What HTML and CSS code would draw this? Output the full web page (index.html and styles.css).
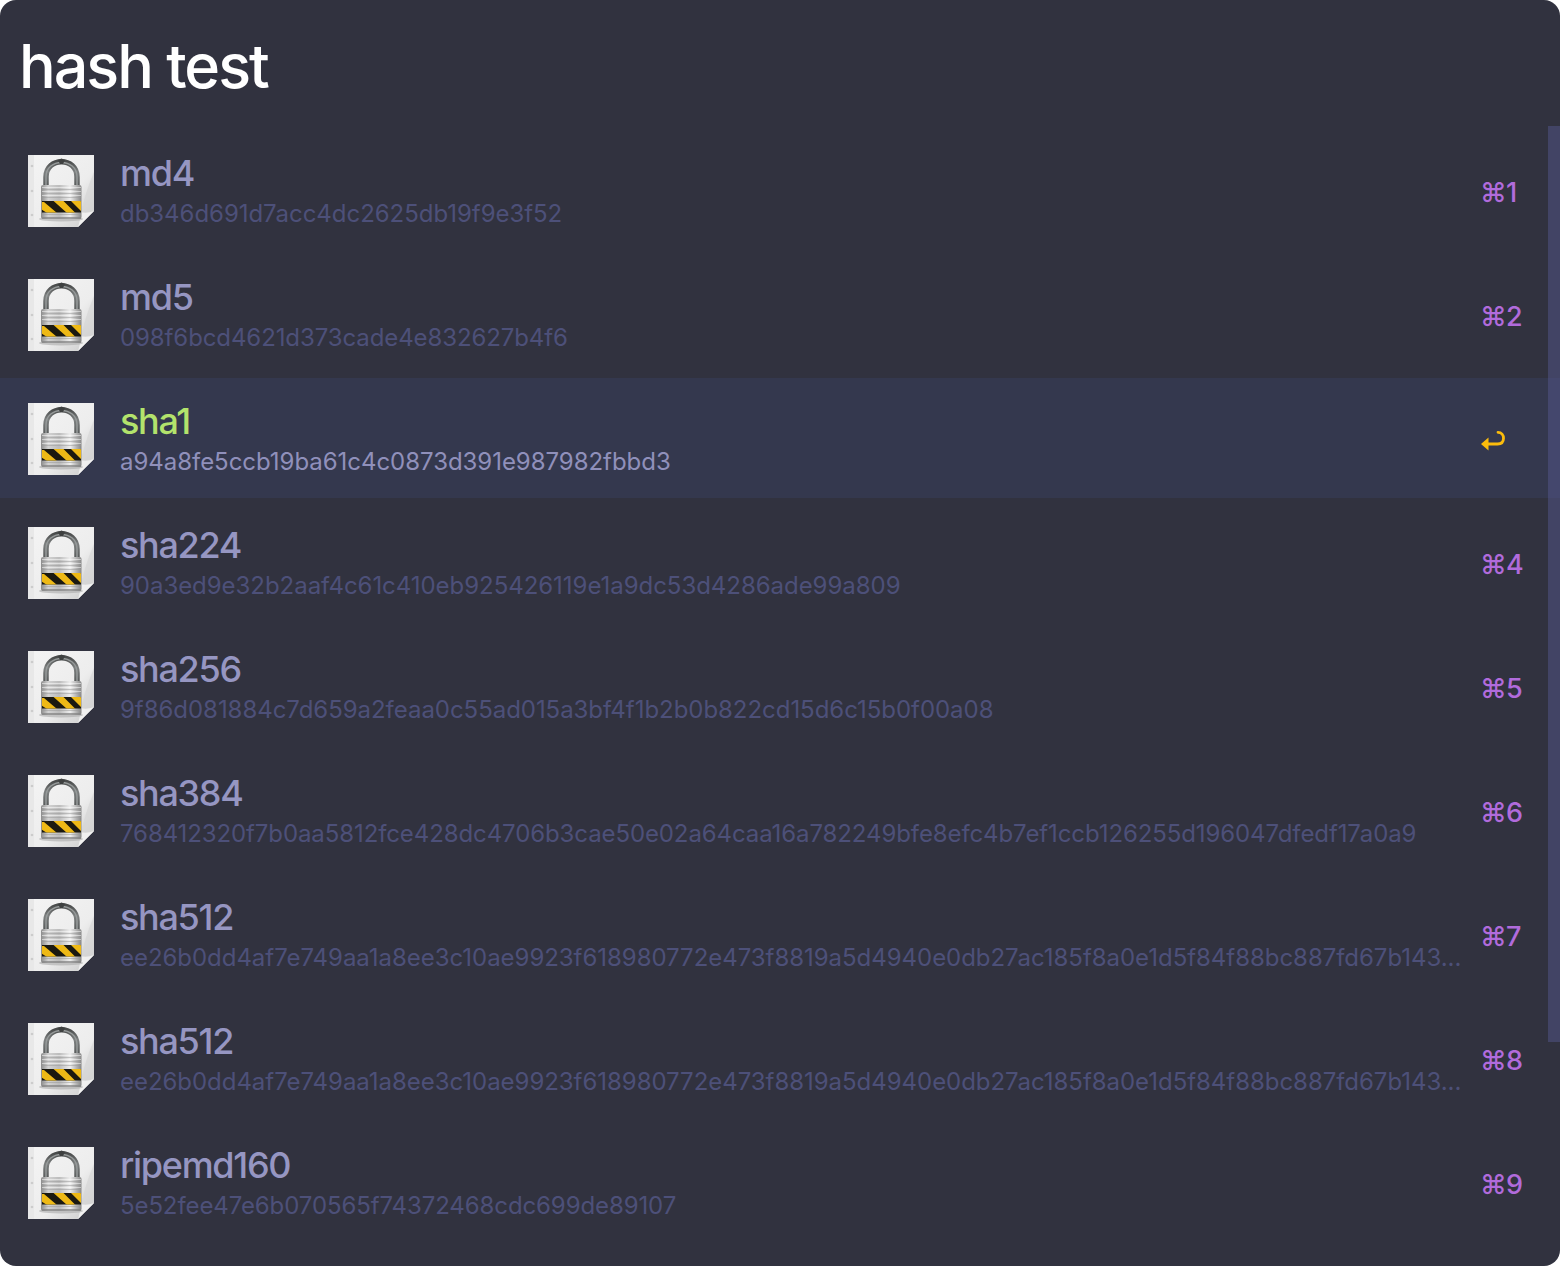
FILE: index.html
```html
<!DOCTYPE html>
<html lang="en">
<head>
<meta charset="utf-8">
<title>hash test</title>
<link rel="stylesheet" href="styles.css">
</head>
<body>
<svg class="defs" aria-hidden="true">
  <defs>
    <linearGradient id="paper" x1="0" y1="0" x2="1" y2="1"><stop offset="0" stop-color="#f4f4f4"/><stop offset=".6" stop-color="#ededed"/><stop offset="1" stop-color="#c9c9c9"/></linearGradient>
    <linearGradient id="metal" x1="0" y1="0" x2="1" y2="0"><stop offset="0" stop-color="#8b8b8b"/><stop offset=".18" stop-color="#d2d2d2"/><stop offset=".45" stop-color="#bcbcbc"/><stop offset=".72" stop-color="#eeeeee"/><stop offset="1" stop-color="#858585"/></linearGradient>
    <linearGradient id="steel" x1="0" y1="0" x2="0" y2="1"><stop offset="0" stop-color="#4a4c4c"/><stop offset=".4" stop-color="#7d8080"/><stop offset="1" stop-color="#555858"/></linearGradient>
    <clipPath id="band"><rect x="15" y="47" width="39" height="11.5"/></clipPath>
    <symbol id="lock" viewBox="0 0 68 74">
      <path d="M1 1H67V57L51 73H1Z" fill="url(#paper)"/>
      <path d="M1 1H7V73H1Z" fill="#e8e8e8"/>
      <path d="M67 18V57L51 73Q57 40 67 18Z" fill="#d3d3d3" opacity=".6"/>
      <path d="M51 73Q54 64 53 58Q60 60 67 57Z" fill="#f0f0f0"/>
      <circle cx="5" cy="12" r="1.3" fill="#ccc"/><circle cx="5" cy="37" r="1.3" fill="#ccc"/><circle cx="5" cy="61" r="1.3" fill="#ccc"/>
      <ellipse cx="34" cy="65" rx="22" ry="2.5" fill="#aaa" opacity=".6"/>
      <path d="M19 33V23C19 2.500 50 2.500 50 23V33" fill="none" stroke="url(#steel)" stroke-width="5.500"/>
      <path d="M19 32V23C19 3.500 50 3.500 50 23V32" fill="none" stroke="#969a9a" stroke-width="1.500"/>
      <path d="M31 6L34.500 4.500L38 6L36 10H33Z" fill="#3e4040"/>
      <rect x="14" y="31" width="40.500" height="34" rx="2" fill="url(#metal)"/>
      <path d="M15 35.500H54M15 39.500H54M15 43.500H54M15 60.500H54" stroke="#999" stroke-width="1" opacity=".5"/>
      <path d="M15 33.500H54M15 37.500H54M15 41.500H54" stroke="#fff" stroke-width="1" opacity=".5"/>
      <path d="M15 64H54" stroke="#858585" stroke-width="1.500"/>
      <g clip-path="url(#band)">
        <rect x="14" y="46" width="42" height="14" fill="#1b1910"/>
        <path d="M14 48L17 48L30 59H20L14 55ZM26 46.500H36L48.500 59H40ZM43.500 46.500H53L66 59H56Z" fill="#eeb916"/>
      </g>
    </symbol>
  </defs>
</svg>
<main class="launcher">
  <header class="query">hash test</header>
  <ul class="results">
    <li class="row"><svg class="icon"><use href="#lock"/></svg><div class="text"><div class="name">md4</div><div class="hash">db346d691d7acc4dc2625db19f9e3f52</div></div><span class="key">⌘1</span></li>
    <li class="row"><svg class="icon"><use href="#lock"/></svg><div class="text"><div class="name">md5</div><div class="hash tight">098f6bcd4621d373cade4e832627b4f6</div></div><span class="key">⌘2</span></li>
    <li class="row selected"><svg class="icon"><use href="#lock"/></svg><div class="text"><div class="name">sha1</div><div class="hash">a94a8fe5ccb19ba61c4c0873d391e987982fbbd3</div></div><span class="key"><svg class="return" viewBox="0 0 26 22"><path d="M18 2.300C21.500 2.300 23.500 5 23.500 8.200C23.500 12 21 14 17.500 14H7" fill="none" stroke="currentColor" stroke-width="2.800" stroke-linecap="round"/><path d="M1 14L8.500 7.500V20.500Z" fill="currentColor"/></svg></span></li>
    <li class="row"><svg class="icon"><use href="#lock"/></svg><div class="text"><div class="name">sha224</div><div class="hash">90a3ed9e32b2aaf4c61c410eb925426119e1a9dc53d4286ade99a809</div></div><span class="key">⌘4</span></li>
    <li class="row"><svg class="icon"><use href="#lock"/></svg><div class="text"><div class="name">sha256</div><div class="hash">9f86d081884c7d659a2feaa0c55ad015a3bf4f1b2b0b822cd15d6c15b0f00a08</div></div><span class="key">⌘5</span></li>
    <li class="row"><svg class="icon"><use href="#lock"/></svg><div class="text"><div class="name">sha384</div><div class="hash tight">768412320f7b0aa5812fce428dc4706b3cae50e02a64caa16a782249bfe8efc4b7ef1ccb126255d196047dfedf17a0a9</div></div><span class="key">⌘6</span></li>
    <li class="row"><svg class="icon"><use href="#lock"/></svg><div class="text"><div class="name">sha512</div><div class="hash">ee26b0dd4af7e749aa1a8ee3c10ae9923f618980772e473f8819a5d4940e0db27ac185f8a0e1d5f84f88bc887fd67b143...</div></div><span class="key">⌘7</span></li>
    <li class="row"><svg class="icon"><use href="#lock"/></svg><div class="text"><div class="name">sha512</div><div class="hash">ee26b0dd4af7e749aa1a8ee3c10ae9923f618980772e473f8819a5d4940e0db27ac185f8a0e1d5f84f88bc887fd67b143...</div></div><span class="key">⌘8</span></li>
    <li class="row"><svg class="icon"><use href="#lock"/></svg><div class="text"><div class="name">ripemd160</div><div class="hash tight">5e52fee47e6b070565f74372468cdc699de89107</div></div><span class="key">⌘9</span></li>
  </ul>
  <div class="scrollbar"></div>
</main>
</body>
</html>
```
FILE: styles.css
```css
body {
  margin: 0;
  background: #fff;
  font-family: Inter, "Liberation Sans", sans-serif;
}
.defs {
  position: absolute;
  width: 0;
  height: 0;
}
.launcher {
  position: relative;
  box-sizing: border-box;
  width: 1560px;
  height: 1266px;
  overflow: hidden;
  border-radius: 16px;
  background: #31323f;
}
.query {
  box-sizing: border-box;
  height: 130px;
  padding: 26px 0 0 19px;
  color: #fff;
  font-size: 61px;
  font-weight: 500;
  line-height: 80px;
  letter-spacing: -2px;
}
.results {
  display: flex;
  flex-direction: column;
  gap: 4px;
  margin: 0;
  padding: 0;
  list-style: none;
}
.row {
  display: flex;
  align-items: center;
  box-sizing: border-box;
  height: 120px;
  padding-left: 27px;
}
.row.selected {
  background: #34384e;
}
.icon {
  flex: none;
  width: 68px;
  height: 74px;
  margin: 1px 25px 0 0;
}
.text {
  flex: none;
  width: 1360px;
  white-space: nowrap;
}
.name {
  height: 43px;
  color: #9696c2;
  font-size: 36px;
  font-weight: 500;
  line-height: 44px;
  letter-spacing: -1.3px;
}
.hash {
  height: 36px;
  color: #4d5079;
  font-size: 24px;
  line-height: 40px;
  letter-spacing: -0.04px;
}
.hash.tight {
  letter-spacing: -0.1px;
}
.selected .name {
  color: #b3e36c;
}
.selected .hash {
  color: #9090bb;
}
.key {
  display: flex;
  padding-top: 5px;
  color: #b16bdc;
  font-size: 27px;
  font-weight: 500;
  line-height: 32px;
  letter-spacing: -0.7px;
}
.selected .key {
  color: #fbbc0c;
}
.return {
  width: 26px;
  height: 22px;
}
.scrollbar {
  position: absolute;
  top: 126px;
  right: 0;
  width: 12px;
  height: 916px;
  background: rgba(84, 86, 140, 0.5);
}
```
